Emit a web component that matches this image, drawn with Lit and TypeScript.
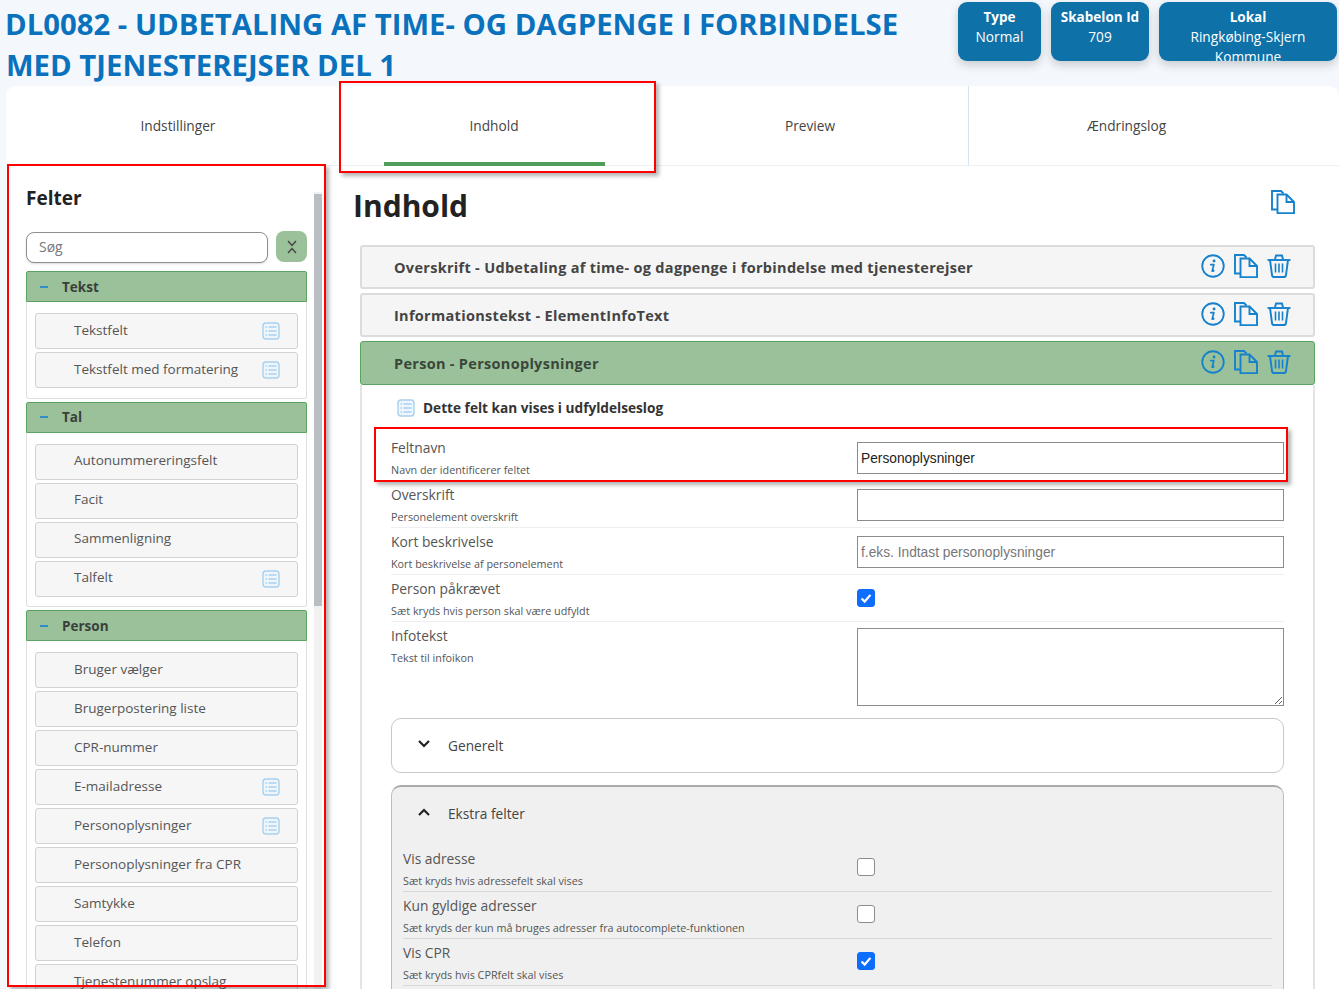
import { LitElement, html, css, svg } from "lit";
import { customElement } from "lit/decorators.js";

const copyIcon = (size = 24) => html`<svg class="ico" width=${size} height=${size} viewBox="0 0 24 24" fill="none" stroke="#1681cc" stroke-width="1.900"><path d="M6.500 19.500H1V1H10L12.500 3.500"/><path d="M6.500 4.500H15.500L23 12V23.200H6.500Z"/><path d="M15.500 4.500V12H23"/></svg>`;
const infoIcon = html`<svg class="ico" width="24" height="24" viewBox="0 0 25 25" fill="none"><circle cx="12.500" cy="12.500" r="11.200" stroke="#1681cc" stroke-width="1.900"/><path d="M10.200 11h3.200l-1.700 6.600c-.1.5.4.6 1.600-.4" stroke="#1681cc" stroke-width="1.800" stroke-linecap="round" stroke-linejoin="round"/><circle cx="13.600" cy="7.300" r="1.500" fill="#1681cc"/></svg>`;
const trashIcon = html`<svg class="ico" width="24" height="24" viewBox="0 0 24 24" fill="none" stroke="#1681cc" stroke-width="1.900"><path d="M.5 6h23"/><path d="M8 5.500 9 1.500h6l1 4"/><path d="M3 6 5 21q.3 2 2 2h10q1.700 0 2-2L21 6"/><path d="M8.500 9.500v9M12 9.500v9M15.500 9.500v9" stroke-width="1.600"/></svg>`;
const listIcon = html`<svg class="list" width="18" height="18" viewBox="0 0 18 18" fill="#eef6fc"><rect x="1" y="1" width="16" height="16" rx="3" stroke="#a9d0ee" stroke-width="1.400"/>${[5, 9, 13].map((y) => svg`<path d="M3.500 ${y}h1.500M6.500 ${y}h8" stroke="#a9d0ee" stroke-width="1.300"/>`)}</svg>`;

const groups: { name: string; items: [string, boolean][] }[] = [
  { name: "Tekst", items: [["Tekstfelt", true], ["Tekstfelt med formatering", true]] },
  { name: "Tal", items: [["Autonummereringsfelt", false], ["Facit", false], ["Sammenligning", false], ["Talfelt", true]] },
  { name: "Person", items: [["Bruger vælger", false], ["Brugerpostering liste", false], ["CPR-nummer", false], ["E-mailadresse", true], ["Personoplysninger", true], ["Personoplysninger fra CPR", false], ["Samtykke", false], ["Telefon", false], ["Tjenestenummer opslag", false]] },
];

@customElement("app-root")
export class AppRoot extends LitElement {
  static styles = css`
    :host { display: block; position: relative; height: 989px; overflow: hidden; background: #f4f8fc; font-family: "Open Sans", sans-serif; color: #333; }
    * { box-sizing: border-box; }
    .top { display: flex; height: 86px; padding-left: 6px; }
    .title { width: 952px; margin: 4px 0 0; font-size: 29.300px; line-height: 41px; font-weight: 700; color: #0a72bd; text-indent: -1px; }
    .pills { display: flex; gap: 10px; padding-top: 2px; }
    .pill { height: 59px; overflow: hidden; background: #0e71a8; color: #fff; border-radius: 9px; text-align: center; font-size: 13.700px; line-height: 19.500px; padding-top: 6px; box-shadow: 0 4px 10px rgba(0,0,0,.18); }
    .pill b { display: block; font-size: 13.500px; line-height: 19px; }
    .p1 { width: 83px; } .p2 { width: 98px; } .p3 { width: 178px; padding-left: 12px; padding-right: 12px; }
    .card { margin-left: 6px; height: 903px; background: #fff; border-radius: 10px 10px 0 0; }
    .tabs { display: flex; height: 80px; padding-left: 14px; border-bottom: 1px solid #eef0f1; }
    .tab { position: relative; width: 316px; display: flex; align-items: center; justify-content: center; font-size: 13.700px; color: #444; }
    .tab.sep { border-left: 1px solid #d5e5ef; }
    .tab.on::after { content: ""; position: absolute; left: 48px; width: 221px; bottom: -1px; height: 4px; background: #4f9d58; }
    .cols { display: flex; height: 823px; }
    .side { position: relative; width: 327px; flex: none; padding: 0 26px 0 20px; overflow: hidden; }
    .bar { position: absolute; left: 308px; top: 26px; width: 8px; height: 797px; background: #f1f1f1; }
    .bar i { display: block; margin-top: 2px; height: 412px; background: #b9bec3; }
    h2 { margin: 19px 0 20px; font-size: 19px; line-height: 26px; color: #222; font-weight: 700; }
    .search { display: flex; gap: 8px; margin-bottom: 8px; }
    .search input { width: 242px; height: 31px; margin-top: 1px; border: 1px solid #8f8f8f; border-radius: 8px; padding: 0 12px 2px; font: 14px "Open Sans", sans-serif; box-shadow: 0 1px 2px rgba(0,0,0,.15); }
    .search input::placeholder { color: #777; }
    .sbtn { width: 31px; height: 31px; border-radius: 8px; background: #9bc19b; display: flex; align-items: center; justify-content: center; }
    .gh { height: 31px; display: flex; align-items: center; background: #9bc19b; border: 1px solid #5aa45f; border-radius: 2px 2px 0 0; font-size: 13.500px; font-weight: 700; color: #3a3f3a; }
    .gh .dash { width: 8px; height: 2px; margin: 0 14px 0 13px; background: #2f8fc4; }
    .gb { border: 1px solid #e0e0e0; border-top: 0; border-radius: 0 0 3px 3px; padding: 11px 8px 9.500px 8px; margin-bottom: 3px; display: flex; flex-direction: column; gap: 3px; }
    .it { height: 36px; flex: none; display: flex; align-items: center; justify-content: space-between; padding: 0 17px 0 38px; border: 1px solid #d2d2d2; border-radius: 3px; background: #f6f6f6; font-size: 13.500px; color: #555; }
    .it span { margin-top: -3px; }
    .list { display: block; flex: none; }
    .main { flex: 1; padding: 0 24px 0 27px; min-width: 0; }
    .h1row { display: flex; justify-content: space-between; align-items: flex-start; height: 79px; padding-right: 20px; }
    h1 { margin: 17px 0 0 -7px; font-size: 30px; line-height: 46px; font-weight: 700; color: #222; }
    .h1row .ico { margin-top: 24px; }
    .acc { height: 44px; margin-bottom: 4px; display: flex; align-items: center; justify-content: space-between; padding: 0 22px 0 32px; background: #f5f5f5; border: 2px solid #dcdcdc; border-radius: 3px; font-size: 14.500px; letter-spacing: .3px; font-weight: 700; color: #444; }
    .acc.on { background: #9bc19b; border: 1px solid #5aa45f; margin-bottom: 0; padding: 0 23px 0 33px; color: #3a463a; }
    .acts { display: flex; gap: 9px; align-items: center; margin-top: -2px; }
    .ico { display: block; flex: none; }
    .panel { border-left: 2px solid #e4e4e4; border-right: 2px solid #e4e4e4; padding: 0 29px; }
    .note { display: flex; align-items: center; gap: 8px; height: 49px; padding: 0 0 4px 6px; font-size: 13.650px; font-weight: 700; color: #333; }
    .row { display: flex; height: 47px; border-bottom: 1px solid #efefef; }
    .row.last { border: 0; height: 96px; }
    .lab { width: 466px; flex: none; padding-top: 4px; font-size: 13.800px; line-height: 19px; color: #555; }
    .lab small { display: block; margin-top: 4px; font-size: 10.800px; line-height: 17px; color: #555; }
    .ctl { flex: 1; padding-top: 7px; }
    .ctl input[type="text"] { margin-top: 1px; }
    .ctl input[type="text"], textarea { display: block; width: 100%; height: 32px; border: 1px solid #8c8c8c; padding: 0 3px; font: 13.750px "Liberation Sans", sans-serif; color: #222; background: #fff; }
    .ctl input::placeholder { color: #777; }
    textarea { height: 78px; margin-top: -1px; }
    input[type="checkbox"] { appearance: none; display: block; width: 18px; height: 18px; margin: 7px 0 0; border: 1px solid #8c8c8c; border-radius: 3px; background: #fff; }
    input[type="checkbox"]:checked { border-color: #0d6efd; background: #0d6efd url("data:image/svg+xml,%3Csvg xmlns='http://www.w3.org/2000/svg' viewBox='0 0 18 18'%3E%3Cpath d='M4 9.500l3.500 3.500L14 5.500' fill='none' stroke='white' stroke-width='2.500'/%3E%3C/svg%3E") center/contain no-repeat; }
    .box { margin-bottom: 12px; border: 1px solid #c8c8c8; border-radius: 10px; height: 55px; display: flex; align-items: center; padding-left: 25px; gap: 17px; font-size: 13.700px; color: #444; }
    .box svg { margin-top: -3px; }
    .extra { display: block; height: 300px; padding: 0 11px; background: #f0f0f0; border: 1px solid #bdbdbd; border-top: 2px solid #aaa; border-radius: 10px 10px 0 0; }
    .exh { display: flex; align-items: center; gap: 17px; height: 53px; padding-left: 14px; font-size: 13.700px; color: #444; margin-bottom: 5px; }
    .exh svg { margin-top: -3px; }
    .extra .row { border-bottom-color: #d8d8d8; }
    .extra .lab { width: 454px; }
    .extra input[type="checkbox"] { margin-top: 6px; }
    .ann { position: absolute; border: 2px solid #f00; box-shadow: 3px 3px 4px rgba(0,0,0,.3); pointer-events: none; }
    .a1 { left: 339px; top: 81px; width: 317px; height: 92px; }
    .a2 { left: 7px; top: 164px; width: 319px; height: 823px; }
    .a3 { left: 374px; top: 427px; width: 914px; height: 55px; }
  `;

  private row(label: string, hint: string, ctl: unknown, cls = "") {
    return html`<div class="row ${cls}"><div class="lab">${label}<small>${hint}</small></div><div class="ctl">${ctl}</div></div>`;
  }

  private cb(on: boolean) {
    return html`<input type="checkbox" .checked=${on} />`;
  }

  render() {
    return html`
      <div class="top">
        <div class="title">DL0082 - UDBETALING AF TIME- OG DAGPENGE I FORBINDELSE MED TJENESTEREJSER DEL 1</div>
        <div class="pills">
          <div class="pill p1"><b>Type</b>Normal</div>
          <div class="pill p2"><b>Skabelon Id</b>709</div>
          <div class="pill p3"><b>Lokal</b>Ringkøbing-Skjern Kommune</div>
        </div>
      </div>
      <div class="card">
        <div class="tabs">
          <div class="tab">Indstillinger</div>
          <div class="tab on">Indhold</div>
          <div class="tab">Preview</div>
          <div class="tab sep">Ændringslog</div>
        </div>
        <div class="cols">
          <aside class="side">
            <div class="bar"><i></i></div>
            <h2>Felter</h2>
            <div class="search">
              <input placeholder="Søg" />
              <div class="sbtn"><svg width="10" height="14" viewBox="0 0 10 14" fill="none" stroke="#444" stroke-width="1.400"><path d="M1 1 5 5.500 9 1M1 13 5 8.500 9 13"/></svg></div>
            </div>
            ${groups.map((g) => html`
              <div class="gh"><span class="dash"></span>${g.name}</div>
              <div class="gb">${g.items.map(([n, l]) => html`<div class="it"><span>${n}</span>${l ? listIcon : ""}</div>`)}</div>
            `)}
          </aside>
          <section class="main">
            <div class="h1row"><h1>Indhold</h1>${copyIcon()}</div>
            ${["Overskrift - Udbetaling af time- og dagpenge i forbindelse med tjenesterejser", "Informationstekst - ElementInfoText", "Person - Personoplysninger"].map((t, i) => html`
              <div class="acc ${i === 2 ? "on" : ""}"><span>${t}</span><div class="acts">${infoIcon}${copyIcon()}${trashIcon}</div></div>
            `)}
            <div class="panel">
              <div class="note">${listIcon}Dette felt kan vises i udfyldelseslog</div>
              ${this.row("Feltnavn", "Navn der identificerer feltet", html`<input type="text" value="Personoplysninger" />`)}
              ${this.row("Overskrift", "Personelement overskrift", html`<input type="text" />`)}
              ${this.row("Kort beskrivelse", "Kort beskrivelse af personelement", html`<input type="text" placeholder="f.eks. Indtast personoplysninger" />`)}
              ${this.row("Person påkrævet", "Sæt kryds hvis person skal være udfyldt", this.cb(true))}
              ${this.row("Infotekst", "Tekst til infoikon", html`<textarea></textarea>`, "last")}
              <div class="box"><svg width="14" height="10" viewBox="0 0 14 10" fill="none" stroke="#222" stroke-width="2.200"><path d="M2 2l5 5 5-5"/></svg>Generelt</div>
              <div class="extra">
                <div class="exh"><svg width="14" height="10" viewBox="0 0 14 10" fill="none" stroke="#222" stroke-width="2.200"><path d="M2 8l5-5 5 5"/></svg>Ekstra felter</div>
                ${this.row("Vis adresse", "Sæt kryds hvis adressefelt skal vises", this.cb(false))}
                ${this.row("Kun gyldige adresser", "Sæt kryds der kun må bruges adresser fra autocomplete-funktionen", this.cb(false))}
                ${this.row("Vis CPR", "Sæt kryds hvis CPRfelt skal vises", this.cb(true))}
              </div>
            </div>
          </section>
        </div>
      </div>
      <div class="ann a1"></div>
      <div class="ann a2"></div>
      <div class="ann a3"></div>
    `;
  }
}
